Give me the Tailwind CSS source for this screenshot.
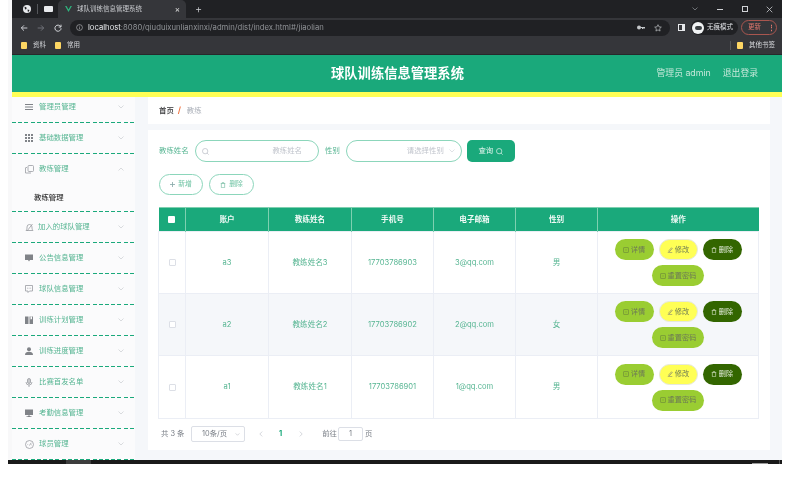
<!doctype html>
<html lang="zh"><head><meta charset="utf-8"><script src="https://cdn.jsdelivr.net/npm/@tailwindcss/browser@4"></script></head>
<body class="bg-white">
<div class="w-[801px] h-[500px] overflow-hidden blur-[0.3px] font-['Inter','Noto_Sans_CJK_SC',sans-serif] text-[7.4px] leading-none">
 <div class="ml-2 w-[774px] h-[464px] flex flex-col bg-[#f8f8f9]">
  <div class="h-[460px] pl-1 flex flex-col">
   <!-- tab strip -->
   <div class="h-[18px] bg-[#202124] flex items-center text-[#dadce0] shrink-0">
    <svg class="ml-[11px] w-[8px] h-[8px]" viewBox="0 0 16 16"><circle cx="8" cy="8" r="8" fill="#e8eaed"/><path d="M3 3l4 2 0 3-3 1zM9 9l4 1-3 5z" fill="#202124"/></svg>
    <div class="ml-[6px] w-px h-[10px] bg-[#55575b]"></div>
    <div class="ml-[6px] w-[9px] h-[6px] bg-[#e8eaed] rounded-[1px]"></div>
    <div class="ml-[5px] w-[128px] h-[18px] bg-[#35363a] rounded-t-[5px] flex items-center pl-[7px] pr-[6px]">
     <svg class="w-[7px] h-[6px] shrink-0" viewBox="0 0 24 21"><path d="M0 0l12 21L24 0h-5l-7 12L5 0z" fill="#2fb57f"/></svg>
     <span class="ml-[5px] text-[6.500px] text-[#c8cace] whitespace-nowrap">球队训练信息管理系统</span>
     <span class="ml-auto text-[8px] text-[#e0e0e0]">×</span>
    </div>
    <span class="ml-[9px] text-[11px] font-light text-[#d0d2d6]">+</span>
    <svg class="ml-auto w-[6px] h-[4px]" viewBox="0 0 12 8" fill="none" stroke="#9aa0a6" stroke-width="1.3"><path d="M1 1l5 5 5-5"/></svg>
    <div class="ml-[19px] w-[6px] h-px bg-[#d0d2d6]"></div>
    <div class="ml-[19px] w-[6px] h-[6px] border border-[#d0d2d6]"></div>
    <svg class="ml-[18px] mr-[9px] w-[7px] h-[7px]" viewBox="0 0 10 10" stroke="#d0d2d6" stroke-width="1.1"><path d="M1 1l8 8M9 1l-8 8"/></svg>
   </div>
   <!-- address bar -->
   <div class="h-[18px] pt-[1px] bg-[#35363a] flex items-center shrink-0">
    <svg class="ml-[8px] w-[8px] h-[8px]" viewBox="0 0 12 12" fill="none" stroke="#dfe1e5" stroke-width="1.3"><path d="M11 6H2M6 2L2 6l4 4"/></svg>
    <svg class="ml-[9px] w-[8px] h-[8px]" viewBox="0 0 12 12" fill="none" stroke="#777a7f" stroke-width="1.3"><path d="M1 6h9M6 2l4 4-4 4"/></svg>
    <svg class="ml-[9px] w-[8px] h-[8px]" viewBox="0 0 12 12" fill="none" stroke="#dfe1e5" stroke-width="1.4"><path d="M10 4a4.600 4.600 0 1 0 .6 2.400M10.500 1v3.500H7"/></svg>
    <div class="ml-[8px] w-[600px] h-[16px] rounded-full bg-[#202124] flex items-center pl-[6px] pr-[6px]">
     <svg class="w-[7px] h-[7px]" viewBox="0 0 12 12" fill="none" stroke="#c4c7ca"><circle cx="6" cy="6" r="5"/><path d="M6 5.500V9M6 3v1.300"/></svg>
     <span class="ml-[5px] text-[7.700px] whitespace-nowrap text-[#8f9296]"><span class="text-[#e8eaed]">localhost</span>:8080/qiuduixunlianxinxi/admin/dist/index.html#/jiaolian</span>
     <svg class="ml-auto w-[8px] h-[5px]" viewBox="0 0 16 10" fill="#c4c7ca"><circle cx="4" cy="5" r="4"/><path d="M7 4h9v2h-1v2h-2V6h-1v2h-2V6H7z"/></svg>
     <svg class="ml-[9px] mr-[2px] w-[8px] h-[8px]" viewBox="0 0 12 12" fill="none" stroke="#c4c7ca"><path d="M6 1l1.500 3.300 3.500.4-2.600 2.400.7 3.500L6 8.800 2.900 10.600l.7-3.500L1 4.700l3.500-.4z"/></svg>
    </div>
    <div class="ml-[8px] w-[7px] h-[7px] border border-[#e8eaed] border-r-[3px]"></div>
    <div class="ml-[6px] h-[15px] w-[47px] rounded-full bg-[#202124] flex items-center">
     <div class="ml-[1px] w-[12px] h-[12px] rounded-full bg-[#f1f3f4] flex items-center justify-center"><div class="w-[7px] h-[4px] rounded-sm bg-[#3c4043]"></div></div>
     <span class="ml-[3px] text-[6.500px] text-[#e0e2e6] whitespace-nowrap">无痕模式</span>
    </div>
    <div class="ml-[3px] h-[15px] w-[36px] rounded-full border border-[#a9564f] flex items-center pl-[6px]">
     <span class="text-[6.500px] text-[#e0776d]">更新</span>
     <span class="ml-[7px] text-[7px] font-bold text-[#e0776d]">⋮</span>
    </div>
   </div>
   <!-- bookmarks -->
   <div class="h-[18px] bg-[#35363a] border-b border-[#27282b] flex items-center text-[#d4d6da] text-[6.500px] shrink-0 box-content">
    <div class="ml-[9px] w-[6px] h-[7px] bg-[#fdd663] rounded-[1px]"></div><span class="ml-[6px]">资料</span>
    <div class="ml-[9px] w-[6px] h-[7px] bg-[#fdd663] rounded-[1px]"></div><span class="ml-[6px]">常用</span>
    <div class="ml-auto w-px h-[9px] bg-[#55575b]"></div>
    <div class="ml-[6px] w-[6px] h-[7px] bg-[#fdd663] rounded-[1px]"></div><span class="ml-[6px] mr-[7px]">其他书签</span>
   </div>
   <!-- header -->
   <div class="h-[37px] bg-[#1aa97b] relative flex items-center justify-end text-[#c6e8da] text-[8.800px] shrink-0">
    <div class="absolute left-[319px] top-[12px] text-[13.300px] font-bold text-white whitespace-nowrap">球队训练信息管理系统</div>
    <span>管理员 admin</span><span class="ml-[12px] mr-[24px]">退出登录</span>
   </div>
   <div class="h-[5px] bg-[#ffff55] shrink-0"></div>
   <!-- body -->
   <div class="flex-1 min-h-0 flex bg-[#f5f7fa]">
    <aside class="w-[123px] bg-[#fbfbfc] text-[#56b592] shrink-0 overflow-hidden">
     <div class="h-[25px] flex items-center pl-[13px] pr-[11px] pb-[5px]">
      <svg class="w-[8px] h-[8px]" viewBox="0 0 8 8" fill="#808388"><path d="M0 1h8v1H0zM0 3.500h8v1H0zM0 6h8v1H0z"/></svg><span class="ml-[6px]">管理员管理</span>
      <svg class="ml-auto w-[6px] h-[4px]" viewBox="0 0 12 8" fill="none" stroke="#b7bbc0"><path d="M1 1l5 5 5-5"/></svg>
     </div>
     <div class="h-px bg-[repeating-linear-gradient(90deg,#1aa97b_0_4px,transparent_4px_6.200px)]"></div>
     <div class="h-[30px] flex items-center pl-[13px] pr-[11px]">
      <svg class="w-[8px] h-[8px]" viewBox="0 0 8 8" fill="#808388"><path d="M0 0h2v2H0zM3 0h2v2H3zM6 0h2v2H6zM0 3h2v2H0zM3 3h2v2H3zM6 3h2v2H6zM0 6h2v2H0zM3 6h2v2H3zM6 6h2v2H6z"/></svg><span class="ml-[6px]">基础数据管理</span>
      <svg class="ml-auto w-[6px] h-[4px]" viewBox="0 0 12 8" fill="none" stroke="#b7bbc0"><path d="M1 1l5 5 5-5"/></svg>
     </div>
     <div class="h-px bg-[repeating-linear-gradient(90deg,#1aa97b_0_4px,transparent_4px_6.200px)]"></div>
     <div class="h-[30px] flex items-center pl-[13px] pr-[11px]">
      <svg class="w-[9px] h-[9px]" viewBox="0 0 9 9" fill="none" stroke="#9a9da2" stroke-width=".8"><rect x="3" y=".5" width="5.500" height="6" rx="1"/><path d="M2 2.500H1a.5.5 0 0 0-.5.5v5h5.500"/></svg><span class="ml-[5px]">教练管理</span>
      <svg class="ml-auto w-[6px] h-[4px]" viewBox="0 0 12 8" fill="none" stroke="#b7bbc0"><path d="M1 7l5-5 5 5"/></svg>
     </div>
     <div class="h-[27px] pl-[22px] flex items-center text-[#333] font-medium">教练管理</div>
     <div class="h-px bg-[repeating-linear-gradient(90deg,#1aa97b_0_4px,transparent_4px_6.200px)]"></div>
     <div class="h-[30px] flex items-center pl-[13px] pr-[11px]">
      <svg class="w-[9px] h-[9px]" viewBox="0 0 9 9" fill="none" stroke="#9a9da2" stroke-width=".8"><path d="M1 7.500c1-1 1-2 1-3.500a2.500 2.500 0 0 1 5 0c0 1.500 0 2.500 1 3.500zM7.500 1L2 8"/></svg><span class="ml-[4px]">加入的球队管理</span>
      <svg class="ml-auto w-[6px] h-[4px]" viewBox="0 0 12 8" fill="none" stroke="#b7bbc0"><path d="M1 1l5 5 5-5"/></svg>
     </div>
     <div class="h-px bg-[repeating-linear-gradient(90deg,#1aa97b_0_4px,transparent_4px_6.200px)]"></div>
     <div class="h-[30px] flex items-center pl-[13px] pr-[11px]">
      <svg class="w-[8px] h-[8px]" viewBox="0 0 8 8" fill="#808388"><path d="M0 .5h8v5.500H5L4 7.500 3 6H0z"/></svg><span class="ml-[6px]">公告信息管理</span>
      <svg class="ml-auto w-[6px] h-[4px]" viewBox="0 0 12 8" fill="none" stroke="#b7bbc0"><path d="M1 1l5 5 5-5"/></svg>
     </div>
     <div class="h-px bg-[repeating-linear-gradient(90deg,#1aa97b_0_4px,transparent_4px_6.200px)]"></div>
     <div class="h-[30px] flex items-center pl-[13px] pr-[11px]">
      <svg class="w-[8px] h-[8px]" viewBox="0 0 8 8" fill="none" stroke="#9a9da2" stroke-width=".8"><path d="M.5.500h7v5.500H4.500L3 7.500V6H.5zM2 3.200h.8M3.700 3.200h.8M5.300 3.200h.8"/></svg><span class="ml-[6px]">球队信息管理</span>
      <svg class="ml-auto w-[6px] h-[4px]" viewBox="0 0 12 8" fill="none" stroke="#b7bbc0"><path d="M1 1l5 5 5-5"/></svg>
     </div>
     <div class="h-px bg-[repeating-linear-gradient(90deg,#1aa97b_0_4px,transparent_4px_6.200px)]"></div>
     <div class="h-[30px] flex items-center pl-[13px] pr-[11px]">
      <svg class="w-[8px] h-[8px]" viewBox="0 0 8 8" fill="#808388"><path d="M0 .5h3.500V8H0zM4.500.5H8V8H4.500z"/><path d="M5.500.5h1.500v3L6.200 3l-.7.500z" fill="#fbfbfc"/></svg><span class="ml-[6px]">训练计划管理</span>
      <svg class="ml-auto w-[6px] h-[4px]" viewBox="0 0 12 8" fill="none" stroke="#b7bbc0"><path d="M1 1l5 5 5-5"/></svg>
     </div>
     <div class="h-px bg-[repeating-linear-gradient(90deg,#1aa97b_0_4px,transparent_4px_6.200px)]"></div>
     <div class="h-[30px] flex items-center pl-[13px] pr-[11px]">
      <svg class="w-[8px] h-[8px]" viewBox="0 0 8 8" fill="#808388"><circle cx="4" cy="2.200" r="2"/><path d="M0 8c0-2.500 1.500-3.300 4-3.300S8 5.500 8 8z"/></svg><span class="ml-[6px]">训练进度管理</span>
      <svg class="ml-auto w-[6px] h-[4px]" viewBox="0 0 12 8" fill="none" stroke="#b7bbc0"><path d="M1 1l5 5 5-5"/></svg>
     </div>
     <div class="h-px bg-[repeating-linear-gradient(90deg,#1aa97b_0_4px,transparent_4px_6.200px)]"></div>
     <div class="h-[30px] flex items-center pl-[13px] pr-[11px]">
      <svg class="w-[8px] h-[9px]" viewBox="0 0 8 9" fill="none" stroke="#9a9da2" stroke-width=".8"><rect x="2.500" y=".5" width="3" height="5" rx="1.500" fill="#c9cbce"/><path d="M1 4a3 3 0 0 0 6 0M4 7v2"/></svg><span class="ml-[6px]">比赛首发名单</span>
      <svg class="ml-auto w-[6px] h-[4px]" viewBox="0 0 12 8" fill="none" stroke="#b7bbc0"><path d="M1 1l5 5 5-5"/></svg>
     </div>
     <div class="h-px bg-[repeating-linear-gradient(90deg,#1aa97b_0_4px,transparent_4px_6.200px)]"></div>
     <div class="h-[30px] flex items-center pl-[13px] pr-[11px]">
      <svg class="w-[8px] h-[8px]" viewBox="0 0 8 8" fill="#808388"><path d="M0 .5h8V6H0zM3 6.500h2v.7h1.500V8h-5v-.8H3z"/></svg><span class="ml-[6px]">考勤信息管理</span>
      <svg class="ml-auto w-[6px] h-[4px]" viewBox="0 0 12 8" fill="none" stroke="#b7bbc0"><path d="M1 1l5 5 5-5"/></svg>
     </div>
     <div class="h-px bg-[repeating-linear-gradient(90deg,#1aa97b_0_4px,transparent_4px_6.200px)]"></div>
     <div class="h-[30px] flex items-center pl-[13px] pr-[11px]">
      <svg class="w-[9px] h-[9px]" viewBox="0 0 9 9" fill="none" stroke="#9a9da2" stroke-width=".8"><circle cx="4.500" cy="4.500" r="4"/><path d="M4.500 5.500L6.200 2.800M2.500 4.500h.6M6 4.800h.6"/></svg><span class="ml-[5px]">球员管理</span>
      <svg class="ml-auto w-[6px] h-[4px]" viewBox="0 0 12 8" fill="none" stroke="#b7bbc0"><path d="M1 1l5 5 5-5"/></svg>
     </div>
     <div class="h-px bg-[repeating-linear-gradient(90deg,#1aa97b_0_4px,transparent_4px_6.200px)]"></div>
    </aside>
    <main class="flex-1 min-w-0 pl-[13px] pr-[12px]">
     <div class="h-[27px] bg-white flex items-center pl-[11px]">
      <span class="text-[#303133] font-medium">首页</span><span class="ml-[4px] mr-[5px] w-[4px] text-[8.500px] text-[#f0703c] font-semibold">/</span><span class="text-[#a8adb6]">教练</span>
     </div>
     <div class="mt-[6px] h-[320px] bg-white pt-[10px] px-[11px]">
      <div class="h-[22px] flex items-center text-[#56b592]">
       <span class="w-[36px] shrink-0">教练姓名</span>
       <div class="w-[124px] h-[22px] rounded-full border border-[#8cd6bb] flex items-center pl-[6px] pr-[16px]">
        <svg class="w-[7px] h-[7px]" viewBox="0 0 10 10" fill="none" stroke="#b8bcc4"><circle cx="4.500" cy="4.500" r="3.800"/><path d="M7.300 7.300L9.500 9.500"/></svg>
        <span class="ml-auto text-[#c0c4cc]">教练姓名</span>
       </div>
       <span class="ml-[6px]">性别</span>
       <div class="ml-[6px] w-[116px] h-[22px] rounded-full border border-[#8cd6bb] flex items-center pr-[6px] justify-end">
        <span class="text-[#c0c4cc]">请选择性别</span>
        <svg class="ml-[5px] w-[6px] h-[4px]" viewBox="0 0 12 8" fill="none" stroke="#c0c4cc"><path d="M1 1l5 5 5-5"/></svg>
       </div>
       <div class="ml-[5px] w-[48px] h-[22px] rounded-[5px] bg-[#1aa97b] text-[#e4f5ee] flex items-center justify-center">
        查询<svg class="ml-[3px] w-[7px] h-[7px]" viewBox="0 0 10 10" fill="none" stroke="#e4f5ee"><circle cx="4.500" cy="4.500" r="3.800"/><path d="M7.300 7.300L9.500 9.500"/></svg>
       </div>
      </div>
      <div class="mt-[12px] h-[21px] flex gap-[6px] text-[#70c4a4] text-[6.800px]">
       <div class="w-[44px] rounded-full border border-[#8cd6bb] flex items-center justify-center">
        <svg class="mr-[3px] w-[5px] h-[5px]" viewBox="0 0 6 6" stroke="#8aa"><path d="M3 0v6M0 3h6"/></svg>新增
       </div>
       <div class="w-[45px] rounded-full border border-[#8cd6bb] flex items-center justify-center">
        <svg class="mr-[3px] w-[6px] h-[6px]" viewBox="0 0 8 8" fill="none" stroke="#6ab79a" stroke-width=".8"><path d="M1 2h6M3 2V.6h2V2M1.800 2v5.500h4.400V2"/></svg>删除
       </div>
      </div>
      <table class="mt-[12px] -ml-px w-[600px] table-fixed border-collapse text-center text-[#56b592] text-[7.600px]">
       <colgroup><col class="w-[27px]"><col class="w-[83px]"><col class="w-[83px]"><col class="w-[82px]"><col class="w-[82px]"><col class="w-[82px]"><col class="w-[161px]"></colgroup>
       <thead><tr class="h-[24px] bg-[#1aa97b] text-[#f0faf6] font-bold border-y border-[#7fd0b0]">
        <th class="border-r border-[#7fd0b0]"><div class="mx-auto w-[7px] h-[7px] bg-white rounded-[1px]"></div></th>
        <th class="border-r border-[#7fd0b0]">账户</th>
        <th class="border-r border-[#7fd0b0]">教练姓名</th>
        <th class="border-r border-[#7fd0b0]">手机号</th>
        <th class="border-r border-[#7fd0b0]">电子邮箱</th>
        <th class="border-r border-[#7fd0b0]">性别</th>
        <th>操作</th>
       </tr></thead>
       <tbody>
        <tr class="h-[62px]">
         <td class="border border-[#ebeef5]"><div class="mx-auto w-[7px] h-[7px] border border-[#dcdfe6] rounded-[1px]"></div></td>
         <td class="border border-[#ebeef5]">a3</td><td class="border border-[#ebeef5]">教练姓名3</td><td class="border border-[#ebeef5]">17703786903</td><td class="border border-[#ebeef5]">3@qq.com</td><td class="border border-[#ebeef5]">男</td>
         <td class="border border-[#ebeef5]"><div class="flex flex-wrap justify-center gap-[5px] text-[#6d7a55] text-[7.200px]">
          <span class="w-[39px] h-[21px] rounded-full bg-[#9acd32] flex items-center justify-center"><svg class="mr-[2px] w-[6px] h-[6px]" viewBox="0 0 8 8" fill="none" stroke="#66803a" stroke-width=".8"><rect x="1" y="1" width="6" height="6"/><path d="M3 4h2"/></svg>详情</span>
          <span class="w-[39px] h-[21px] rounded-full bg-[#ffff55] border border-[#e6e8dc] flex items-center justify-center"><svg class="mr-[2px] w-[6px] h-[6px]" viewBox="0 0 8 8" fill="none" stroke="#777" stroke-width=".8"><path d="M1 7.500h6M2 5.500L6 1l1 1-4 4.500z"/></svg>修改</span>
          <span class="w-[39px] h-[21px] rounded-full bg-[#336600] text-[#e8efe0] flex items-center justify-center"><svg class="mr-[2px] w-[6px] h-[6px]" viewBox="0 0 8 8" fill="none" stroke="#dde8d0" stroke-width=".8"><path d="M1 2h6M3 2V.6h2V2M1.800 2v5.500h4.400V2"/></svg>删除</span>
          <span class="w-[52px] h-[21px] rounded-full bg-[#9acd32] flex items-center justify-center"><svg class="mr-[2px] w-[6px] h-[6px]" viewBox="0 0 8 8" fill="none" stroke="#66803a" stroke-width=".8"><rect x="1" y="1" width="6" height="6"/><path d="M3 4h2"/></svg>重置密码</span>
         </div></td>
        </tr>
        <tr class="h-[62px] bg-[#f5f7fa]">
         <td class="border border-[#ebeef5]"><div class="mx-auto w-[7px] h-[7px] border border-[#dcdfe6] bg-white rounded-[1px]"></div></td>
         <td class="border border-[#ebeef5]">a2</td><td class="border border-[#ebeef5]">教练姓名2</td><td class="border border-[#ebeef5]">17703786902</td><td class="border border-[#ebeef5]">2@qq.com</td><td class="border border-[#ebeef5]">女</td>
         <td class="border border-[#ebeef5]"><div class="flex flex-wrap justify-center gap-[5px] text-[#6d7a55] text-[7.200px]">
          <span class="w-[39px] h-[21px] rounded-full bg-[#9acd32] flex items-center justify-center"><svg class="mr-[2px] w-[6px] h-[6px]" viewBox="0 0 8 8" fill="none" stroke="#66803a" stroke-width=".8"><rect x="1" y="1" width="6" height="6"/><path d="M3 4h2"/></svg>详情</span>
          <span class="w-[39px] h-[21px] rounded-full bg-[#ffff55] border border-[#e6e8dc] flex items-center justify-center"><svg class="mr-[2px] w-[6px] h-[6px]" viewBox="0 0 8 8" fill="none" stroke="#777" stroke-width=".8"><path d="M1 7.500h6M2 5.500L6 1l1 1-4 4.500z"/></svg>修改</span>
          <span class="w-[39px] h-[21px] rounded-full bg-[#336600] text-[#e8efe0] flex items-center justify-center"><svg class="mr-[2px] w-[6px] h-[6px]" viewBox="0 0 8 8" fill="none" stroke="#dde8d0" stroke-width=".8"><path d="M1 2h6M3 2V.6h2V2M1.800 2v5.500h4.400V2"/></svg>删除</span>
          <span class="w-[52px] h-[21px] rounded-full bg-[#9acd32] flex items-center justify-center"><svg class="mr-[2px] w-[6px] h-[6px]" viewBox="0 0 8 8" fill="none" stroke="#66803a" stroke-width=".8"><rect x="1" y="1" width="6" height="6"/><path d="M3 4h2"/></svg>重置密码</span>
         </div></td>
        </tr>
        <tr class="h-[63px]">
         <td class="border border-[#ebeef5]"><div class="mx-auto w-[7px] h-[7px] border border-[#dcdfe6] rounded-[1px]"></div></td>
         <td class="border border-[#ebeef5]">a1</td><td class="border border-[#ebeef5]">教练姓名1</td><td class="border border-[#ebeef5]">17703786901</td><td class="border border-[#ebeef5]">1@qq.com</td><td class="border border-[#ebeef5]">男</td>
         <td class="border border-[#ebeef5]"><div class="flex flex-wrap justify-center gap-[5px] text-[#6d7a55] text-[7.200px]">
          <span class="w-[39px] h-[21px] rounded-full bg-[#9acd32] flex items-center justify-center"><svg class="mr-[2px] w-[6px] h-[6px]" viewBox="0 0 8 8" fill="none" stroke="#66803a" stroke-width=".8"><rect x="1" y="1" width="6" height="6"/><path d="M3 4h2"/></svg>详情</span>
          <span class="w-[39px] h-[21px] rounded-full bg-[#ffff55] border border-[#e6e8dc] flex items-center justify-center"><svg class="mr-[2px] w-[6px] h-[6px]" viewBox="0 0 8 8" fill="none" stroke="#777" stroke-width=".8"><path d="M1 7.500h6M2 5.500L6 1l1 1-4 4.500z"/></svg>修改</span>
          <span class="w-[39px] h-[21px] rounded-full bg-[#336600] text-[#e8efe0] flex items-center justify-center"><svg class="mr-[2px] w-[6px] h-[6px]" viewBox="0 0 8 8" fill="none" stroke="#dde8d0" stroke-width=".8"><path d="M1 2h6M3 2V.6h2V2M1.800 2v5.500h4.400V2"/></svg>删除</span>
          <span class="w-[52px] h-[21px] rounded-full bg-[#9acd32] flex items-center justify-center"><svg class="mr-[2px] w-[6px] h-[6px]" viewBox="0 0 8 8" fill="none" stroke="#66803a" stroke-width=".8"><rect x="1" y="1" width="6" height="6"/><path d="M3 4h2"/></svg>重置密码</span>
         </div></td>
        </tr>
       </tbody>
      </table>
      <div class="mt-[7px] h-[16px] flex items-center text-[#7a7f87]">
       <span class="ml-[2px] w-[23px] whitespace-nowrap">共 3 条</span>
       <div class="ml-[7px] w-[54px] h-[16px] border border-[#dcdfe6] rounded-[2px] flex items-center pl-[10px] pr-[4px]">10条/页<svg class="ml-auto w-[5px] h-[3px]" viewBox="0 0 12 8" fill="none" stroke="#b0b4bc" stroke-width="1.400"><path d="M1 1l5 5 5-5"/></svg></div>
       <svg class="ml-[14px] w-[4px] h-[6px]" viewBox="0 0 6 10" fill="none" stroke="#b8bcc4"><path d="M5 1L1 5l4 4"/></svg>
       <span class="ml-[16px] text-[#1aa97b] font-bold">1</span>
       <svg class="ml-[17px] w-[4px] h-[6px]" viewBox="0 0 6 10" fill="none" stroke="#b8bcc4"><path d="M1 1l4 4-4 4"/></svg>
       <span class="ml-[19px]">前往</span>
       <div class="ml-[1px] w-[25px] h-[14px] border border-[#dcdfe6] rounded-[2px] flex items-center justify-center">1</div>
       <span class="ml-[2px]">页</span>
      </div>
     </div>
    </main>
   </div>
  </div>
  <div class="h-[4px] bg-[#1a1a1a] flex shrink-0">
   <div class="ml-[58px] w-[25px] h-[4px] bg-[#3d3d3d]"></div>
   <div class="ml-auto mt-[3px] w-[16px] h-px bg-[#9a9a9a]"></div>
   <div class="ml-[11px] mr-[2px] w-px h-[4px] bg-[#555]"></div>
  </div>
 </div>
</div>
</body></html>
